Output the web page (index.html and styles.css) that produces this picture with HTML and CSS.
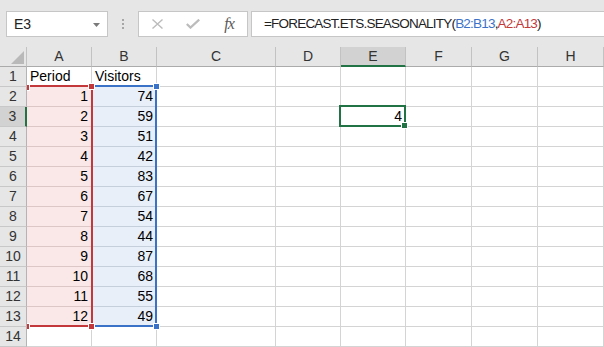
FILE: index.html
```html
<!DOCTYPE html>
<html lang="en">

<head>
    <meta charset="UTF-8" />
    <title>FORECAST.ETS.SEASONALITY</title>
    <link rel="stylesheet" href="styles.css">
</head>

<body>
    <div class="toolbar">
        <div class="namebox">
            <span>E3</span>
            <svg class="caret" width="7" height="4" viewBox="0 0 7 4"><polygon points="0,0 7,0 3.5,4" fill="#7a7a7a" /></svg>
        </div>
        <div class="grip">
            <svg width="2" height="10" viewBox="0 0 2 10">
                <rect x="0" y="0" width="2" height="2" fill="#a6a6a6" />
                <rect x="0" y="4" width="2" height="2" fill="#a6a6a6" />
                <rect x="0" y="8" width="2" height="2" fill="#a6a6a6" />
            </svg>
        </div>
        <div class="fx-buttons">
            <div class="slot">
                <svg width="11" height="10" viewBox="0 0 11 10"><path d="M0.5 0.5 L10.5 9.5 M10.5 0.5 L0.5 9.5" stroke="#bcbcbc" stroke-width="1.4" fill="none" /></svg>
            </div>
            <div class="slot">
                <svg width="14" height="10" viewBox="0 0 14 10"><path d="M0.8 5 L4.5 8.6 L13.2 0.6" stroke="#bcbcbc" stroke-width="2.2" fill="none" /></svg>
            </div>
            <div class="slot fx">fx</div>
        </div>
        <div class="formula">=FORECAST.ETS.SEASONALITY(<span class="ref-b">B2:B13</span>,<span class="ref-a">A2:A13</span>)</div>
    </div>

    <div class="sheet">
        <div class="row head">
            <div class="corner"><svg width="13" height="13" viewBox="0 0 13 13"><polygon points="13,0 13,13 0,13" fill="#b9b9b9" /></svg></div>
            <div>A</div><div>B</div><div>C</div><div>D</div><div class="sel-col">E</div><div>F</div><div>G</div><div>H</div>
        </div>
        <div class="row"><div class="rh">1</div><div>Period</div><div>Visitors</div><div></div><div></div><div></div><div></div><div></div><div></div></div>
        <div class="row"><div class="rh">2</div><div class="num pa">1</div><div class="num pb">74</div><div></div><div></div><div></div><div></div><div></div><div></div></div>
        <div class="row"><div class="rh sel-row">3</div><div class="num pa">2</div><div class="num pb">59</div><div></div><div></div><div class="num">4</div><div></div><div></div><div></div></div>
        <div class="row"><div class="rh">4</div><div class="num pa">3</div><div class="num pb">51</div><div></div><div></div><div></div><div></div><div></div><div></div></div>
        <div class="row"><div class="rh">5</div><div class="num pa">4</div><div class="num pb">42</div><div></div><div></div><div></div><div></div><div></div><div></div></div>
        <div class="row"><div class="rh">6</div><div class="num pa">5</div><div class="num pb">83</div><div></div><div></div><div></div><div></div><div></div><div></div></div>
        <div class="row"><div class="rh">7</div><div class="num pa">6</div><div class="num pb">67</div><div></div><div></div><div></div><div></div><div></div><div></div></div>
        <div class="row"><div class="rh">8</div><div class="num pa">7</div><div class="num pb">54</div><div></div><div></div><div></div><div></div><div></div><div></div></div>
        <div class="row"><div class="rh">9</div><div class="num pa">8</div><div class="num pb">44</div><div></div><div></div><div></div><div></div><div></div><div></div></div>
        <div class="row"><div class="rh">10</div><div class="num pa">9</div><div class="num pb">87</div><div></div><div></div><div></div><div></div><div></div><div></div></div>
        <div class="row"><div class="rh">11</div><div class="num pa">10</div><div class="num pb">68</div><div></div><div></div><div></div><div></div><div></div><div></div></div>
        <div class="row"><div class="rh">12</div><div class="num pa">11</div><div class="num pb">55</div><div></div><div></div><div></div><div></div><div></div><div></div></div>
        <div class="row"><div class="rh">13</div><div class="num pa">12</div><div class="num pb">49</div><div></div><div></div><div></div><div></div><div></div><div></div></div>
        <div class="row"><div class="rh">14</div><div></div><div></div><div></div><div></div><div></div><div></div><div></div><div></div></div>

        <!-- range highlights from the formula -->
        <div class="range range-b"></div>
        <div class="range range-a"></div>
        <div class="handle red tl"></div>
        <div class="handle red bl"></div>
        <div class="handle blue tr-b"></div>
        <div class="handle blue br-b"></div>
        <div class="handle red tr-a"></div>
        <div class="handle red br-a"></div>

        <!-- active cell -->
        <div class="active-cell"></div>
        <div class="handle green fill"></div>
    </div>
</body>

</html>
```

FILE: styles.css
```css
body,
html {
    margin: 0;
    padding: 0;
    background: #fff;
    font-family: "Liberation Sans", Arial, sans-serif;
    font-size: 14px;
    color: #000;
}

.toolbar {
    height: 47px;
    box-sizing: border-box;
    padding: 11px 0 0 6px;
    background: #e6e6e6;
    display: flex;
    align-items: flex-start;
    overflow: hidden;
}

.namebox {
    width: 102px;
    height: 26px;
    box-sizing: border-box;
    background: #fff;
    border: 1px solid #c6c6c6;
    display: flex;
    align-items: center;
    justify-content: space-between;
    padding: 0 7px 0 7px;
    color: #222;
}

.caret {
    margin-top: 1px;
}

.grip {
    width: 30px;
    height: 26px;
    display: flex;
    align-items: center;
    justify-content: center;
}

.fx-buttons {
    width: 110px;
    height: 26px;
    box-sizing: border-box;
    background: #fff;
    border: 1px solid #c6c6c6;
    display: flex;
}

.slot {
    width: 36px;
    display: flex;
    align-items: center;
    justify-content: center;
}

.fx {
    font-family: "Liberation Serif", serif;
    font-style: italic;
    font-size: 16px;
    color: #5a5a5a;
    letter-spacing: -1px;
}

.formula {
    flex: 1;
    height: 26px;
    box-sizing: border-box;
    margin-left: 3px;
    margin-right: -2px;
    background: #fff;
    border: 1px solid #c6c6c6;
    padding: 0 0 0 12px;
    font-size: 13.5px;
    letter-spacing: -0.8px;
    line-height: 24px;
    white-space: nowrap;
    color: #222;
}

.ref-b {
    color: #3a72c8;
}

.ref-a {
    color: #c3393b;
}

.sheet {
    position: relative;
}

.row {
    display: grid;
    grid-template-columns: 27px 65px 65px 119px 65px 65px 66px 66px 66px;
    height: 20px;
}

.row > div {
    box-sizing: border-box;
    border-right: 1px solid #d4d4d4;
    border-bottom: 1px solid #d4d4d4;
    line-height: 19px;
    padding: 0 3px;
    white-space: nowrap;
    overflow: hidden;
}

.head > div {
    background: #e6e6e6;
    border-right-color: #c2c2c2;
    border-bottom-color: #ababab;
    text-align: center;
    color: #333;
}

.corner {
    position: relative;
}

.corner svg {
    position: absolute;
    right: 2px;
    bottom: 2px;
}

.row > .rh {
    background: #e6e6e6;
    border-right-color: #b4b4b4;
    border-bottom-color: #c8c8c8;
    text-align: center;
    padding: 0;
    color: #333;
}

.head > .sel-col {
    background: #d2d2d2;
    border-bottom: 2px solid #217346;
}

.row > .sel-row {
    background: #d2d2d2;
    border-right: 2px solid #217346;
}

.num {
    text-align: right;
}

.row > .pa {
    background: #fae8e8;
    border-bottom-color: #dcc6c6;
}

.row > .pb {
    background: #e8eff9;
    border-bottom-color: #c5cfdc;
}

.range {
    position: absolute;
    top: 38px;
    height: 242px;
    box-sizing: border-box;
}

.range-a {
    left: 27px;
    width: 66px;
    border: 2px solid #c3393b;
    border-left: none;
}

.range-b {
    left: 91px;
    width: 66px;
    border: 2px solid #3a72c8;
}

.handle {
    position: absolute;
    width: 5px;
    height: 5px;
    border: 1px solid #fff;
}

.red {
    background: #c3393b;
}

.blue {
    background: #3a72c8;
}

.green {
    background: #217346;
}

.tl {
    left: 27px;
    top: 37px;
    width: 2px;
    border-left: none;
}

.bl {
    left: 27px;
    top: 276px;
    width: 2px;
    border-left: none;
}

.tr-a {
    left: 88px;
    top: 36px;
}

.br-a {
    left: 88px;
    top: 276px;
}

.tr-b {
    left: 153px;
    top: 36px;
}

.br-b {
    left: 153px;
    top: 276px;
}

.active-cell {
    position: absolute;
    left: 339px;
    top: 58px;
    width: 67px;
    height: 22px;
    box-sizing: border-box;
    border: 2px solid #217346;
}

.fill {
    left: 401px;
    top: 75px;
}
```
